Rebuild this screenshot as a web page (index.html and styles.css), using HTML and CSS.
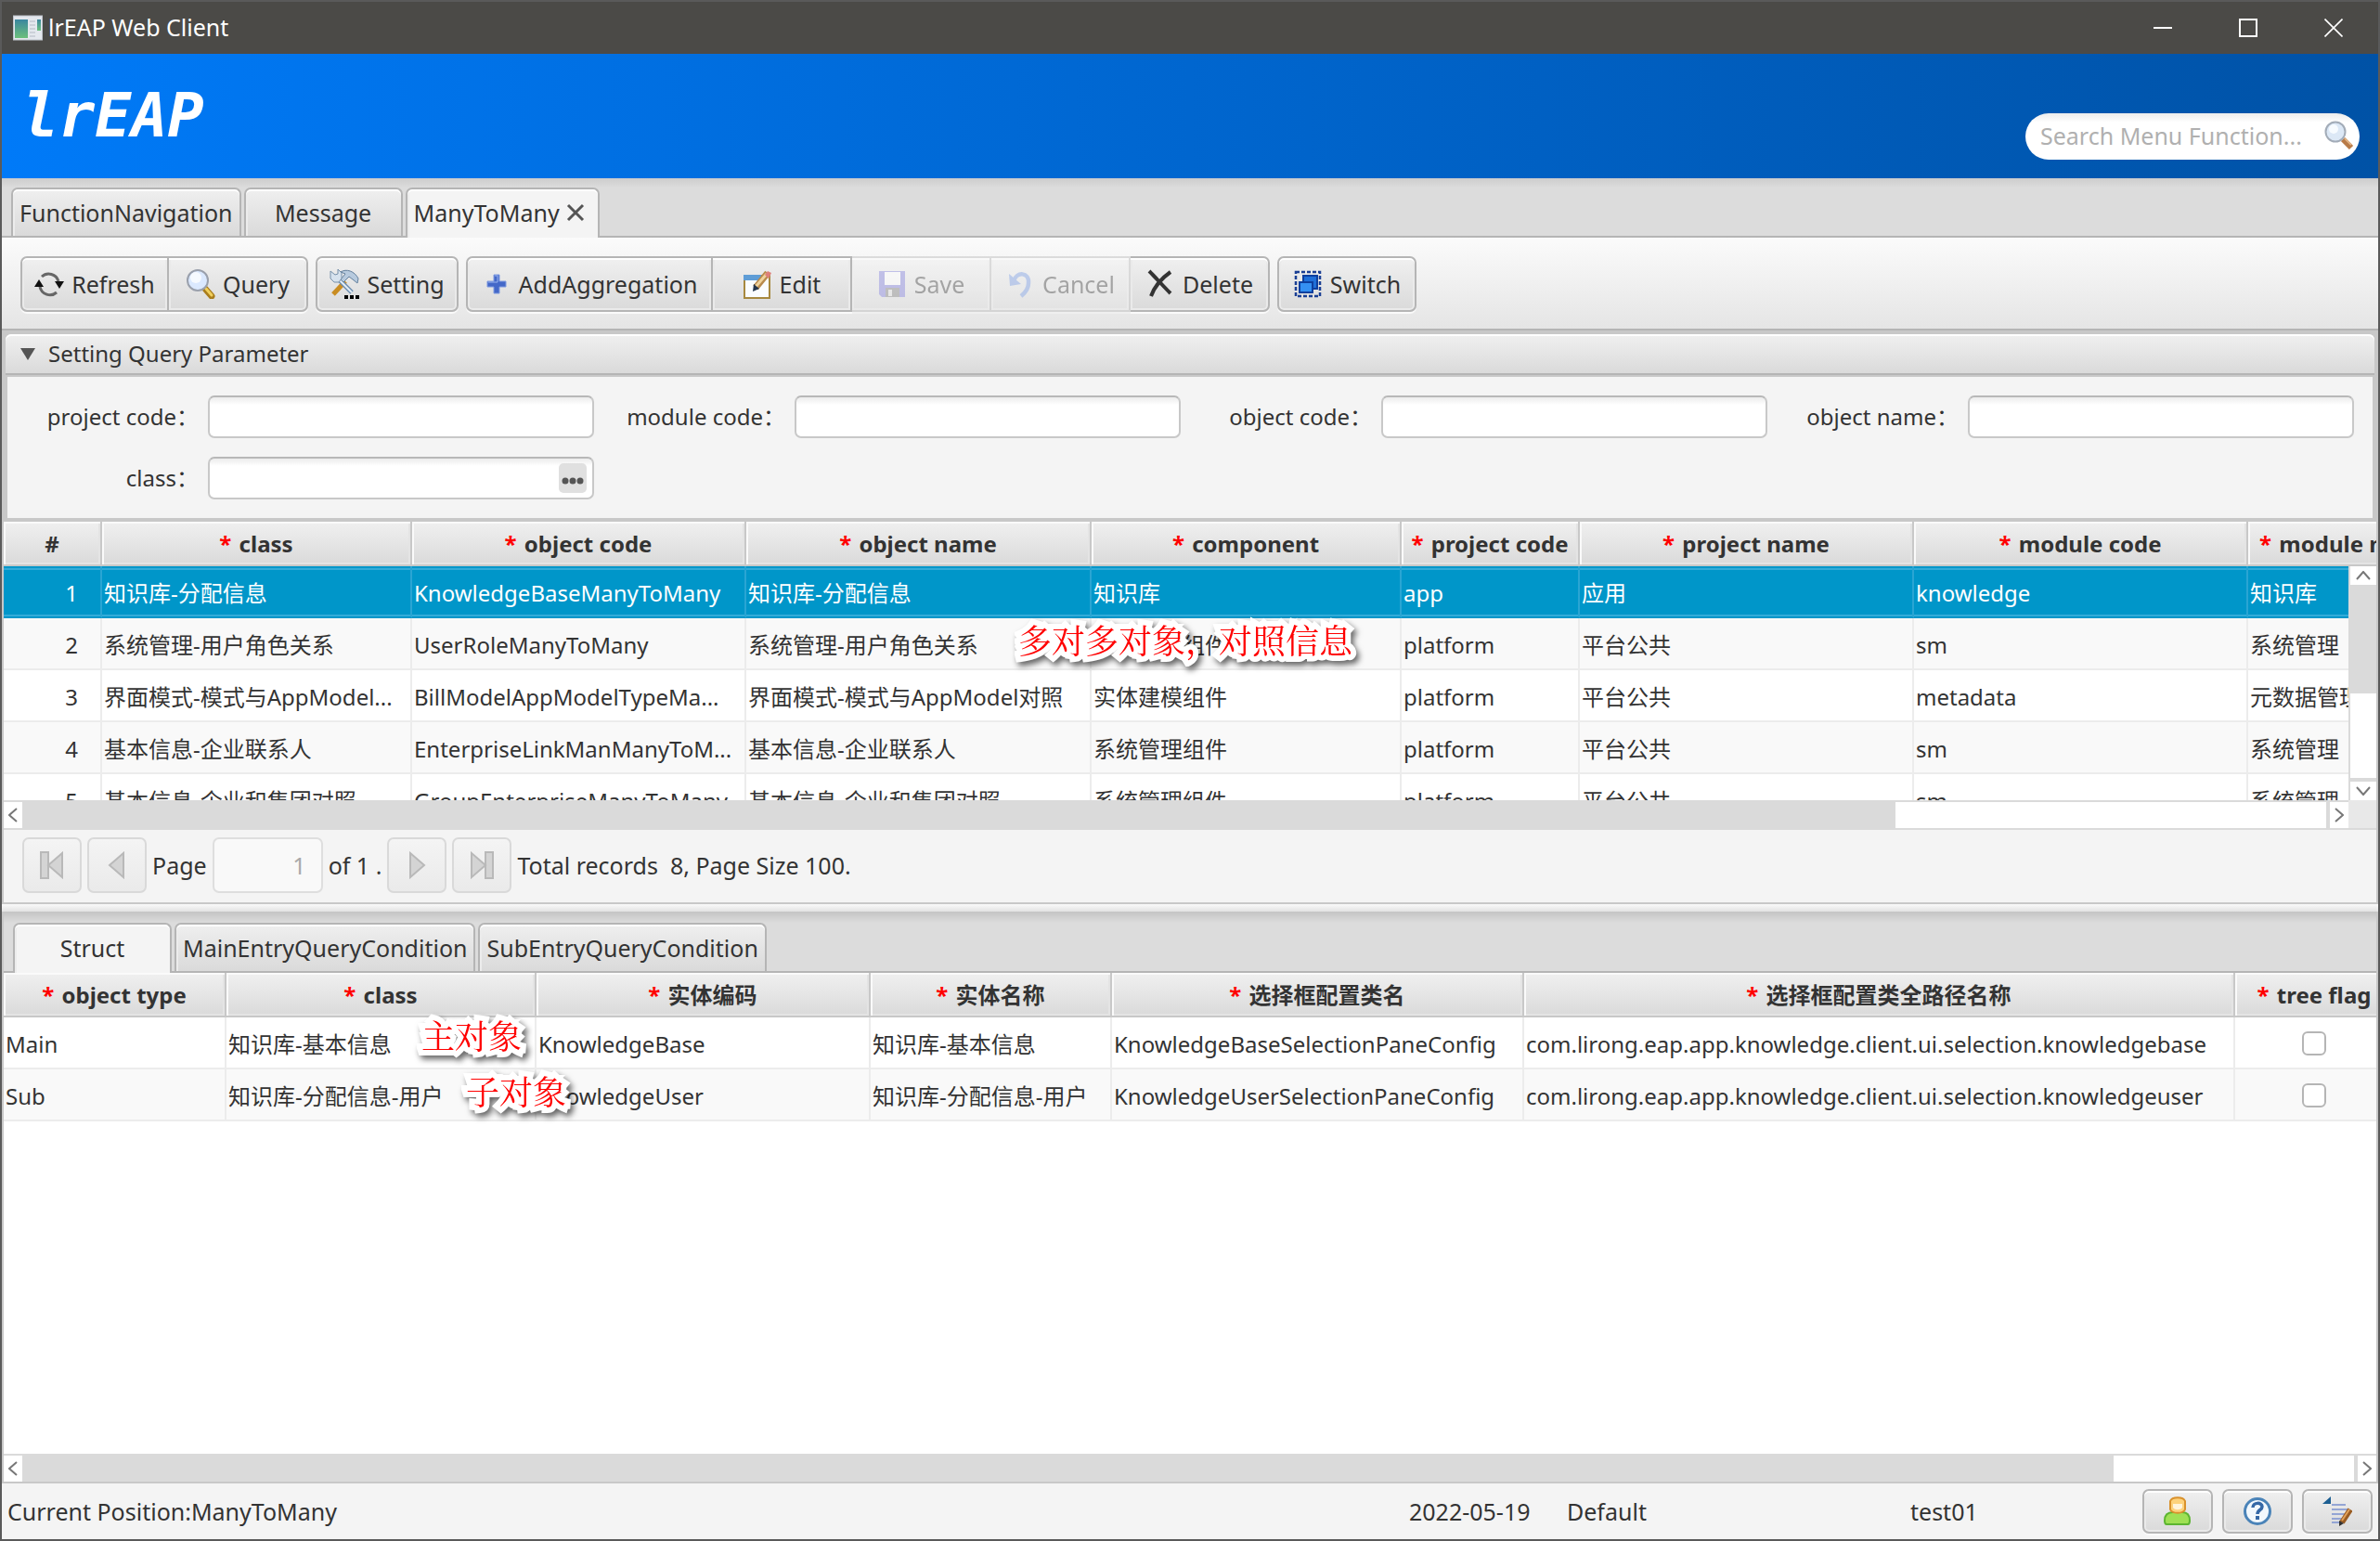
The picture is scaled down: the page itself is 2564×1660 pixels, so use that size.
FILE: index.html
```html
<!DOCTYPE html>
<html lang="en">
<head>
<meta charset="utf-8">
<title>lrEAP Web Client</title>
<link rel="stylesheet" href="styles.css">
</head>
<body>
<div class="window">
  <div class="titlebar">
    <svg class="app-icon" width="32" height="28" viewBox="0 0 32 28"><defs><linearGradient id="gApp" x1="0" y1="0" x2="0" y2="1"><stop offset="0" stop-color="#3a86a0"/><stop offset="1" stop-color="#6cc07c"/></linearGradient></defs><rect x="0.500" y="1" width="31" height="26" fill="#e4e8ee" stroke="#bfc4cc"/><rect x="2" y="5" width="14" height="20" fill="url(#gApp)"/><path d="M18 7h6M18 11h6M18 15h6M18 19h6M18 23h6" stroke="#b4bac4" stroke-width="1"/><rect x="26" y="5" width="4" height="12" fill="url(#gApp)"/></svg>
    <span class="window-title">lrEAP Web Client</span>
    <button class="win-btn" aria-label="Minimize"><svg width="20" height="20" viewBox="0 0 20 20"><path d="M0 10h20" stroke="#fff" stroke-width="2"/></svg></button>
    <button class="win-btn" aria-label="Maximize"><svg width="20" height="20" viewBox="0 0 20 20"><rect x="1" y="1" width="18" height="18" fill="none" stroke="#fff" stroke-width="2"/></svg></button>
    <button class="win-btn" aria-label="Close"><svg width="20" height="20" viewBox="0 0 20 20"><path d="M0.500 0.500l19 19M19.500 0.500l-19 19" stroke="#fff" stroke-width="1.600"/></svg></button>
  </div>

  <header class="banner">
    <div class="logo">lrEAP</div>
    <div class="search">
      <input type="text" aria-label="Search Menu Function" placeholder="Search Menu Function...">
      <svg width="32" height="32" viewBox="0 0 32 32"><path d="M20 20l9 9" stroke="#b87b48" stroke-width="6"/><path d="M22 19l7 7" stroke="#e0b184" stroke-width="2"/><circle cx="12" cy="12" r="10.500" fill="#dce8f6" stroke="#a3acb8" stroke-width="2"/><circle cx="10" cy="9" r="5" fill="#f7fbff"/></svg>
    </div>
  </header>

  <nav class="tabs">
    <button class="tab">FunctionNavigation</button>
    <button class="tab">Message</button>
    <button class="tab selected closable">ManyToMany<svg width="20" height="20" viewBox="0 0 20 20"><path d="M2 2l16 16M18 2L2 18" stroke="#555" stroke-width="3"/></svg></button>
  </nav>

  <div class="toolbar">
    <div class="group">
      <button class="btn refresh"><svg width="32" height="32" viewBox="0 0 32 32"><g fill="none" stroke="#666" stroke-width="3"><path d="M8 8a11 11 0 0 1 18 5"/><path d="M24 25a11 11 0 0 1-18-6"/></g><path d="M22 13h10l-5 8zM0 19h10l-5-8z" fill="#111"/></svg>Refresh</button>
      <button class="btn query"><svg width="32" height="32" viewBox="0 0 32 32"><path d="M21 21l7 8" stroke="#a97d1c" stroke-width="7" stroke-linecap="round"/><path d="M22 21l6 7" stroke="#f0cf5c" stroke-width="3" stroke-linecap="round"/><circle cx="13" cy="12" r="11" fill="#dbe9ff" stroke="#9aa0ac" stroke-width="2"/><circle cx="11" cy="9" r="6" fill="#f6faff"/></svg>Query</button>
    </div>
    <button class="btn setting"><svg width="32" height="32" viewBox="0 0 32 32"><path d="M17 13L4 27" stroke="#c98d22" stroke-width="5"/><path d="M10 11l14 14" stroke="#6f8fb0" stroke-width="5"/><path d="M10 11l14 14" stroke="#e3edf7" stroke-width="2"/><path d="M12 3c6-4 15-1 19 7l-1 5-5-4-4-3-6 6-3-3 5-6z" fill="#b7cade" stroke="#64809d"/><path d="M1 2l5 4 3-1V0l4 4v6l-3 4H5L1 10z" fill="#d6e2ee" stroke="#7690aa"/><path d="M16 28h4v4h-4zM22 28h4v4h-4zM28 28h4v4h-4z" fill="#000"/></svg>Setting</button>
    <div class="group">
      <button class="btn add"><svg width="32" height="32" viewBox="0 0 32 32"><path d="M13 6h6v7h7v6h-7v7h-6v-7H6v-6h7z" fill="#4468c8" stroke="#7e9ae0"/><path d="M14 7h3v7H7" fill="none" stroke="#9ab4f0" stroke-width="1"/></svg>AddAggregation</button>
      <button class="btn"><svg width="32" height="32" viewBox="0 0 32 32"><rect x="2" y="7" width="27" height="24" fill="#fafdff" stroke="#a7893f" stroke-width="2"/><path d="M1 6h19v6H1z" fill="#5f9dd6"/><path d="M12 16l3 0-3 6z" fill="#14365c"/><path d="M14 20L27 4" stroke="#b88a4c" stroke-width="7"/><path d="M14 19L26 5" stroke="#f0d39c" stroke-width="3"/><path d="M24 6l3-4 4 2-3 6z" fill="#dd7f79"/><path d="M11 24l1-8 6 5z" fill="#24364d"/></svg>Edit</button>
      <button class="btn" disabled><svg width="32" height="32" viewBox="0 0 32 32"><path d="M2 2h28v28H5l-3-3z" fill="#7775d8"/><rect x="8" y="3" width="17" height="14" fill="#fff"/><rect x="9" y="20" width="15" height="10" fill="#777"/><rect x="12" y="22" width="4" height="7" fill="#ddd"/></svg>Save</button>
      <button class="btn" disabled><svg width="32" height="32" viewBox="0 0 32 32"><path d="M9 13C12 2 26 3 25 15c0 6-3 10-8 14" fill="none" stroke="#6f94e0" stroke-width="4.500"/><path d="M4 5l1 13 12-2z" fill="#6f94e0"/></svg>Cancel</button>
      <button class="btn"><svg width="32" height="32" viewBox="0 0 32 32"><path d="M4 2c7 7 14 15 23 24M27 3C17 10 10 18 6 29" fill="none" stroke="#333" stroke-width="4"/></svg>Delete</button>
    </div>
    <button class="btn switch"><svg width="32" height="32" viewBox="0 0 32 32"><rect x="3" y="3" width="26" height="26" fill="none" stroke="#1a3f94" stroke-width="2.500" stroke-dasharray="4 2"/><rect x="11" y="7" width="15" height="14" fill="#1f6fd8" stroke="#0d3f9e" stroke-width="2"/><rect x="7" y="14" width="14" height="11" fill="#3490f2" stroke="#0d3f9e" stroke-width="2"/></svg>Switch</button>
  </div>

  <section class="pane">
    <h2 class="pane-title"><svg width="16" height="13" viewBox="0 0 16 13"><path d="M0 0h16L8 13z" fill="#555"/></svg>Setting Query Parameter</h2>
    <form class="params">
      <div class="field"><label for="f1">project code：</label><input id="f1" type="text"></div>
      <div class="field"><label for="f2">module code：</label><input id="f2" type="text"></div>
      <div class="field"><label for="f3">object code：</label><input id="f3" type="text"></div>
      <div class="field"><label for="f4">object name：</label><input id="f4" type="text"></div>
      <div class="field"><label for="f5">class：</label><div class="picker"><input id="f5" type="text"><button type="button" aria-label="Choose class"><svg width="24" height="8" viewBox="0 0 24 8"><circle cx="4" cy="4" r="3.500"/><circle cx="12" cy="4" r="3.500"/><circle cx="20" cy="4" r="3.500"/></svg></button></div></div>
    </form>
  </section>

  <section class="list">
    <div class="viewport">
      <table class="grid main-grid">
        <colgroup><col class="w106"><col class="w334"><col class="w360"><col class="w372"><col class="w334"><col class="w192"><col class="w360"><col class="w360"><col class="w212"></colgroup>
        <thead><tr><th>#</th><th><i>*</i> class</th><th><i>*</i> object code</th><th><i>*</i> object name</th><th><i>*</i> component</th><th><i>*</i> project code</th><th><i>*</i> project name</th><th><i>*</i> module code</th><th><i>*</i> module name</th></tr></thead>
        <tbody>
          <tr class="current"><td class="num">1</td><td>知识库-分配信息</td><td>KnowledgeBaseManyToMany</td><td>知识库-分配信息</td><td>知识库</td><td>app</td><td>应用</td><td>knowledge</td><td>知识库</td></tr>
          <tr><td class="num">2</td><td>系统管理-用户角色关系</td><td>UserRoleManyToMany</td><td>系统管理-用户角色关系</td><td>系统管理组件</td><td>platform</td><td>平台公共</td><td>sm</td><td>系统管理</td></tr>
          <tr><td class="num">3</td><td>界面模式-模式与AppModel...</td><td>BillModelAppModelTypeMa...</td><td>界面模式-模式与AppModel对照</td><td>实体建模组件</td><td>platform</td><td>平台公共</td><td>metadata</td><td>元数据管理</td></tr>
          <tr><td class="num">4</td><td>基本信息-企业联系人</td><td>EnterpriseLinkManManyToM...</td><td>基本信息-企业联系人</td><td>系统管理组件</td><td>platform</td><td>平台公共</td><td>sm</td><td>系统管理</td></tr>
          <tr><td class="num">5</td><td>基本信息-企业和集团对照</td><td>GroupEnterpriseManyToMany</td><td>基本信息-企业和集团对照</td><td>系统管理组件</td><td>platform</td><td>平台公共</td><td>sm</td><td>系统管理</td></tr>
        </tbody>
      </table>
      <div class="vbar">
        <button aria-label="Scroll up"><svg width="16" height="10" viewBox="0 0 16 10"><path d="M1 9l7-8 7 8"/></svg></button>
        <div class="vthumb"></div><div class="vrest"></div>
        <button aria-label="Scroll down"><svg width="16" height="10" viewBox="0 0 16 10"><path d="M1 1l7 8 7-8"/></svg></button>
      </div>
      <div class="note note-main">多对多对象，对照信息</div>
    </div>
    <div class="hbar cornered">
      <button aria-label="Scroll left"><svg width="10" height="16" viewBox="0 0 10 16"><path d="M9 1L1 8l8 7"/></svg></button>
      <div class="hthumb"></div><div class="hrest"></div>
      <button aria-label="Scroll right"><svg width="10" height="16" viewBox="0 0 10 16"><path d="M1 1l8 7-8 7"/></svg></button>
      <div class="corner"></div>
    </div>
    <div class="pager">
      <button disabled aria-label="First page"><svg width="26" height="30" viewBox="0 0 26 30"><path d="M1 1h8v28H1zM24 2v26L9 15z"/></svg></button>
      <button disabled aria-label="Previous page"><svg width="26" height="30" viewBox="0 0 26 30"><path d="M20 2v26L5 15z"/></svg></button>
      <label for="page">Page</label>
      <input id="page" type="text" value="1" disabled>
      <span>of 1 .</span>
      <button disabled aria-label="Next page"><svg width="26" height="30" viewBox="0 0 26 30"><path d="M6 2v26l15-13z"/></svg></button>
      <button disabled aria-label="Last page"><svg width="26" height="30" viewBox="0 0 26 30"><path d="M17 1h8v28h-8zM2 2v26l15-13z"/></svg></button>
      <span class="total">Total records&nbsp; 8, Page Size 100.</span>
    </div>
  </section>
  <div class="divider"></div>

  <section class="detail">
    <nav class="tabs">
      <button class="tab selected">Struct</button>
      <button class="tab">MainEntryQueryCondition</button>
      <button class="tab">SubEntryQueryCondition</button>
    </nav>
    <div class="viewport">
      <table class="grid sub-grid">
        <colgroup><col class="w240"><col class="w334"><col class="w360"><col class="w260"><col class="w444"><col class="w766"><col class="w172"></colgroup>
        <thead><tr><th><i>*</i> object type</th><th><i>*</i> class</th><th><i>*</i> 实体编码</th><th><i>*</i> 实体名称</th><th><i>*</i> 选择框配置类名</th><th><i>*</i> 选择框配置类全路径名称</th><th><i>*</i> tree flag</th></tr></thead>
        <tbody>
          <tr><td>Main</td><td>知识库-基本信息</td><td>KnowledgeBase</td><td>知识库-基本信息</td><td>KnowledgeBaseSelectionPaneConfig</td><td>com.lirong.eap.app.knowledge.client.ui.selection.knowledgebase</td><td class="mid"><input type="checkbox" aria-label="tree flag, Main"></td></tr>
          <tr><td>Sub</td><td>知识库-分配信息-用户</td><td>KnowledgeUser</td><td>知识库-分配信息-用户</td><td>KnowledgeUserSelectionPaneConfig</td><td>com.lirong.eap.app.knowledge.client.ui.selection.knowledgeuser</td><td class="mid"><input type="checkbox" aria-label="tree flag, Sub"></td></tr>
        </tbody>
      </table>
      <div class="note note-first">主对象</div>
      <div class="note note-second">子对象</div>
    </div>
    <div class="hbar wide">
      <button aria-label="Scroll left"><svg width="10" height="16" viewBox="0 0 10 16"><path d="M9 1L1 8l8 7"/></svg></button>
      <div class="hthumb"></div><div class="hrest"></div>
      <button aria-label="Scroll right"><svg width="10" height="16" viewBox="0 0 10 16"><path d="M1 1l8 7-8 7"/></svg></button>
    </div>
  </section>

  <footer class="status">
    <span>Current Position:ManyToMany</span><span>2022-05-19</span><span>Default</span><span>test01</span>
    <div class="status-actions">
      <button class="btn" aria-label="User"><svg width="32" height="32" viewBox="0 0 32 32"><path d="M4 30c-2 0-2-2-2-4 0-7 4-9 9-9h10c5 0 8 3 8 9 0 2 0 4-2 4z" fill="#9fe054" stroke="#5cb531" stroke-width="2"/><path d="M8 5c2-5 14-5 16 0v9c-2 5-14 5-16 0z" fill="#fdd27c" stroke="#d9912c" stroke-width="2"/><path d="M11 8h10v4c-2 3-8 3-10 0z" fill="#fff4dc"/></svg></button>
      <button class="btn" aria-label="Help"><svg width="32" height="32" viewBox="0 0 32 32"><circle cx="16" cy="16" r="13.500" fill="#f2f8fd" stroke="#4a83b8" stroke-width="3"/><path d="M11 12c0-6 10-6 10-1 0 4-5 3-5 8" fill="none" stroke="#3568a6" stroke-width="3.500"/><rect x="14" y="21" width="4" height="4" fill="#3568a6"/></svg></button>
      <button class="btn" aria-label="Log"><svg width="32" height="32" viewBox="0 0 32 32"><path d="M0 8l9-8v8z" fill="#1d5f92"/><path d="M10 9h15M10 14h18M10 19h15M10 24h12M10 28h8" stroke="#94a5d4" stroke-width="2"/><path d="M30 14l-9 14" stroke="#9a5c22" stroke-width="6"/><path d="M29 14l-8 12" stroke="#e2a35c" stroke-width="2"/><path d="M18 26l5 3-5 3z" fill="#333"/></svg></button>
    </div>
  </footer>
</div>
</body>
</html>
```
FILE: styles.css
```css
* { box-sizing: border-box; }
body {
  margin: 0;
  font-family: "Noto Sans", "Noto Sans CJK SC", sans-serif;
  font-size: 25px;
  line-height: 32px;
  color: #333;
  background: #f4f4f4;
}
button, input { font: inherit; color: inherit; margin: 0; }
button { padding: 0; border: 0; background: none; white-space: nowrap; }
svg { display: block; flex: none; }
.window {
  min-height: 100vh;
  display: flex;
  flex-direction: column;
  border: 2px solid #5a5a5a;
  overflow: hidden;
}

/* window frame */
.titlebar { display: flex; align-items: center; height: 56px; padding: 0 2px 0 12px; background: #4b4a47; color: #fff; }
.window-title { flex: 1; margin-left: 6px; padding-bottom: 2px; }
.win-btn { width: 92px; height: 56px; display: flex; align-items: center; justify-content: center; }

/* banner */
.banner {
  display: flex;
  justify-content: space-between;
  height: 134px;
  padding: 0 20px 0 22px;
  background: linear-gradient(to right, #007af8, #0052a6);
}
.logo { margin-top: 31px; font: italic bold 65px/72px "DejaVu Sans Mono", monospace; color: #fff; }
.search {
  display: flex;
  align-items: center;
  width: 360px;
  height: 50px;
  margin-top: 64px;
  padding: 0 6px 2px 16px;
  border-radius: 25px;
  background: linear-gradient(#ececec, #fff 10px);
}
.search input { flex: 1; min-width: 0; padding: 0; border: 0; background: none; outline: 0; }
.search input::placeholder { color: #b0b0b0; opacity: 1; }

/* tabs */
.tabs {
  display: flex;
  gap: 3px;
  height: 64px;
  padding: 10px 10px 0;
  border-bottom: 2px solid #b5b5b5;
  background: linear-gradient(#cdcdcd, #dcdcdc 10px);
}
.tab {
  display: flex;
  align-items: center;
  justify-content: center;
  gap: 7px;
  min-width: 171px;
  height: 52px;
  padding: 0 7px;
  border: 2px solid #b5b5b5;
  border-bottom: 0;
  border-radius: 7px 7px 0 0;
  background: linear-gradient(#efefef, #dadada);
  box-shadow: inset 0 2px #fff, inset 2px 0 #ececec;
}
.tab.selected { height: 54px; padding-bottom: 2px; background: #f4f4f4; }
.tab.closable { padding-right: 14px; }

/* toolbar */
.toolbar {
  display: flex;
  gap: 8px;
  height: 100px;
  padding: 20px 20px 0;
  border-bottom: 2px solid #b5b5b5;
  background: linear-gradient(#fbfbfb, #e5e5e5);
}
.group { display: flex; }
.btn {
  display: flex;
  align-items: center;
  justify-content: center;
  gap: 8px;
  min-width: 150px;
  height: 60px;
  border: 2px solid #b5b5b5;
  border-radius: 7px;
  background: linear-gradient(#f0f0f0, #dadada);
  box-shadow: inset 0 2px #fff, inset 0 0 0 2px #eaeaea, 0 2px #fafafa;
}
.group .btn { border-radius: 0; }
.group .btn + .btn { border-left: 0; }
.group .btn:first-child { border-radius: 7px 0 0 7px; }
.group .btn:last-child { border-radius: 0 7px 7px 0; }
.btn.refresh { min-width: 160px; }
.btn.setting { min-width: 154px; }
.btn.add { min-width: 266px; }
.btn:disabled { opacity: 0.4; }

/* query parameters */
.pane { padding: 4px; background: #c8c8c8; }
.pane-title {
  display: flex;
  align-items: center;
  gap: 14px;
  height: 44px;
  margin: 0 0 2px;
  padding-left: 16px;
  border-bottom: 2px solid #b5b5b5;
  border-radius: 6px 6px 0 0;
  background: linear-gradient(#f0f0f0, #dadada);
  box-shadow: inset 0 2px #fff;
  font-size: 24px;
  font-weight: 400;
}
.params {
  display: grid;
  grid-template-columns: repeat(4, minmax(0, 1fr));
  row-gap: 20px;
  margin: 0 2px;
  padding: 20px 20px 20px 0;
  background: #f4f4f4;
}
.field { display: grid; grid-template-columns: minmax(0, 206fr) minmax(0, 416fr); gap: 10px; align-items: center; }
.field label { font-size: 24px; text-align: right; white-space: nowrap; }
.field input {
  width: 100%;
  height: 46px;
  padding: 0 12px;
  border: 2px solid #c8c8c8;
  border-top-color: #b8b8b8;
  border-radius: 7px;
  background: linear-gradient(#ececec, #fff 8px);
}
.picker { position: relative; }
.picker button {
  position: absolute;
  top: 7px;
  right: 8px;
  width: 30px;
  height: 32px;
  padding: 6px 3px 0;
  border-radius: 5px;
  background: #e0e0e0;
  fill: #555;
}

/* data grids */
.list, .detail { border: 0 solid #c8c8c8; border-width: 0 2px; }
.viewport { position: relative; overflow: hidden; background: #fff; }
.list .viewport { height: 300px; }
.grid { table-layout: fixed; border-spacing: 0; font-size: 24px; }
.main-grid { width: 2630px; }
.sub-grid { width: 2576px; }
.w106 { width: 106px; } .w172 { width: 172px; } .w192 { width: 192px; } .w212 { width: 212px; }
.w240 { width: 240px; } .w260 { width: 260px; } .w334 { width: 334px; } .w360 { width: 360px; }
.w372 { width: 372px; } .w444 { width: 444px; } .w766 { width: 766px; }
.grid th {
  height: 48px;
  padding: 2px 0 0;
  border: 0 solid #c8c8c8;
  border-width: 0 2px 2px 0;
  background: linear-gradient(#f0f0f0, #dadada);
  box-shadow: inset 2px 2px #fafafa, inset -2px -2px #e4e4e4;
  white-space: nowrap;
}
.grid th i { margin-right: 2px; color: #f00; font-style: normal; }
.grid td {
  height: 56px;
  padding: 4px 0 0 2px;
  border: 0 solid #ececec;
  border-width: 0 2px 2px 0;
  overflow: hidden;
  white-space: nowrap;
}
.grid .num { padding-right: 24px; text-align: right; }
.grid .mid { padding: 2px 0 0; text-align: center; }
.grid tr:nth-child(even) td { background: #f9f9f9; }
.grid .current td {
  color: #fff;
  background: #0096c9;
  border-color: #2aa5d3;
  border-bottom-color: #0096c9;
  box-shadow: inset 0 2px #0096c9, inset 0 4px #33abd8, inset 0 -2px #33abd8;
}
.grid input {
  display: block;
  appearance: none;
  width: 26px;
  height: 26px;
  margin: 0 auto;
  border: 2px solid #b5b5b5;
  border-radius: 6px;
  background: #fff;
}

/* scrollbars */
.vbar, .hbar { display: flex; background: #dadada; }
.vbar button, .hbar button { display: flex; align-items: center; justify-content: center; background: #fff; }
.vbar path, .hbar path { fill: none; stroke: #777; stroke-width: 2; }
.vbar { position: absolute; top: 48px; right: 0; bottom: 0; width: 30px; padding-left: 2px; flex-direction: column; }
.vbar button { height: 20px; }
.vthumb { height: 117px; }
.vrest { flex: 1; margin-bottom: 4px; background: #fff; }
.hbar { height: 32px; padding: 2px 0; }
.hbar button { width: 20px; }
.hthumb { flex: 1; }
.hrest { width: 464px; margin-right: 4px; background: #fff; }
.wide { height: 30px; padding-bottom: 0; }
.wide .hrest { width: 259px; }
.corner { width: 30px; margin-top: -2px; background: #e8e8e8; }

/* callouts over the grids */
.note {
  position: absolute;
  font: 36px/44px "Noto Serif CJK SC", "Noto Sans CJK SC", sans-serif;
  color: #f00;
  -webkit-text-stroke: 12px #fff;
  paint-order: stroke fill;
  stroke-linejoin: round;
  filter: drop-shadow(3px 4px 3px #0009);
  white-space: nowrap;
}
.note-main { left: 1093px; top: 105px; }
.note-first { left: 450px; top: 45px; }
.note-second { left: 498px; top: 105px; }

/* pager */
.pager { display: flex; align-items: center; gap: 6px; height: 78px; padding: 0 20px 2px; background: #f4f4f4; }
.pager button {
  display: flex;
  align-items: center;
  justify-content: center;
  width: 64px;
  height: 60px;
  border: 2px solid #d9d9d9;
  border-radius: 7px;
  background: linear-gradient(#f4f4f4, #eaeaea);
}
.pager path { fill: #d4d4d4; stroke: #b9b9b9; stroke-width: 2; }
.pager input {
  width: 119px;
  height: 60px;
  padding: 0 16px;
  border: 2px solid #dedede;
  border-radius: 7px;
  background: #f9f9f9;
  color: #aaa;
  text-align: right;
}
.divider { height: 10px; border-top: 2px solid #c8c8c8; background: linear-gradient(#fafafa, #e2e2e2); }

/* detail */
.detail { flex: 1; display: flex; flex-direction: column; }
.detail .tabs { height: 66px; padding-top: 12px; background: linear-gradient(#c4c4c4, #dcdcdc 12px); }
.detail .viewport { flex: 1; }

/* status bar */
.status {
  display: grid;
  grid-template-columns: 1510fr 170fr 370fr 250fr auto;
  align-items: center;
  height: 62px;
  padding: 0 6px;
  border-top: 2px solid #c8c8c8;
  background: #f4f4f4;
}
.status-actions { display: flex; gap: 10px; }
.status .btn { min-width: 76px; height: 48px; }
```
